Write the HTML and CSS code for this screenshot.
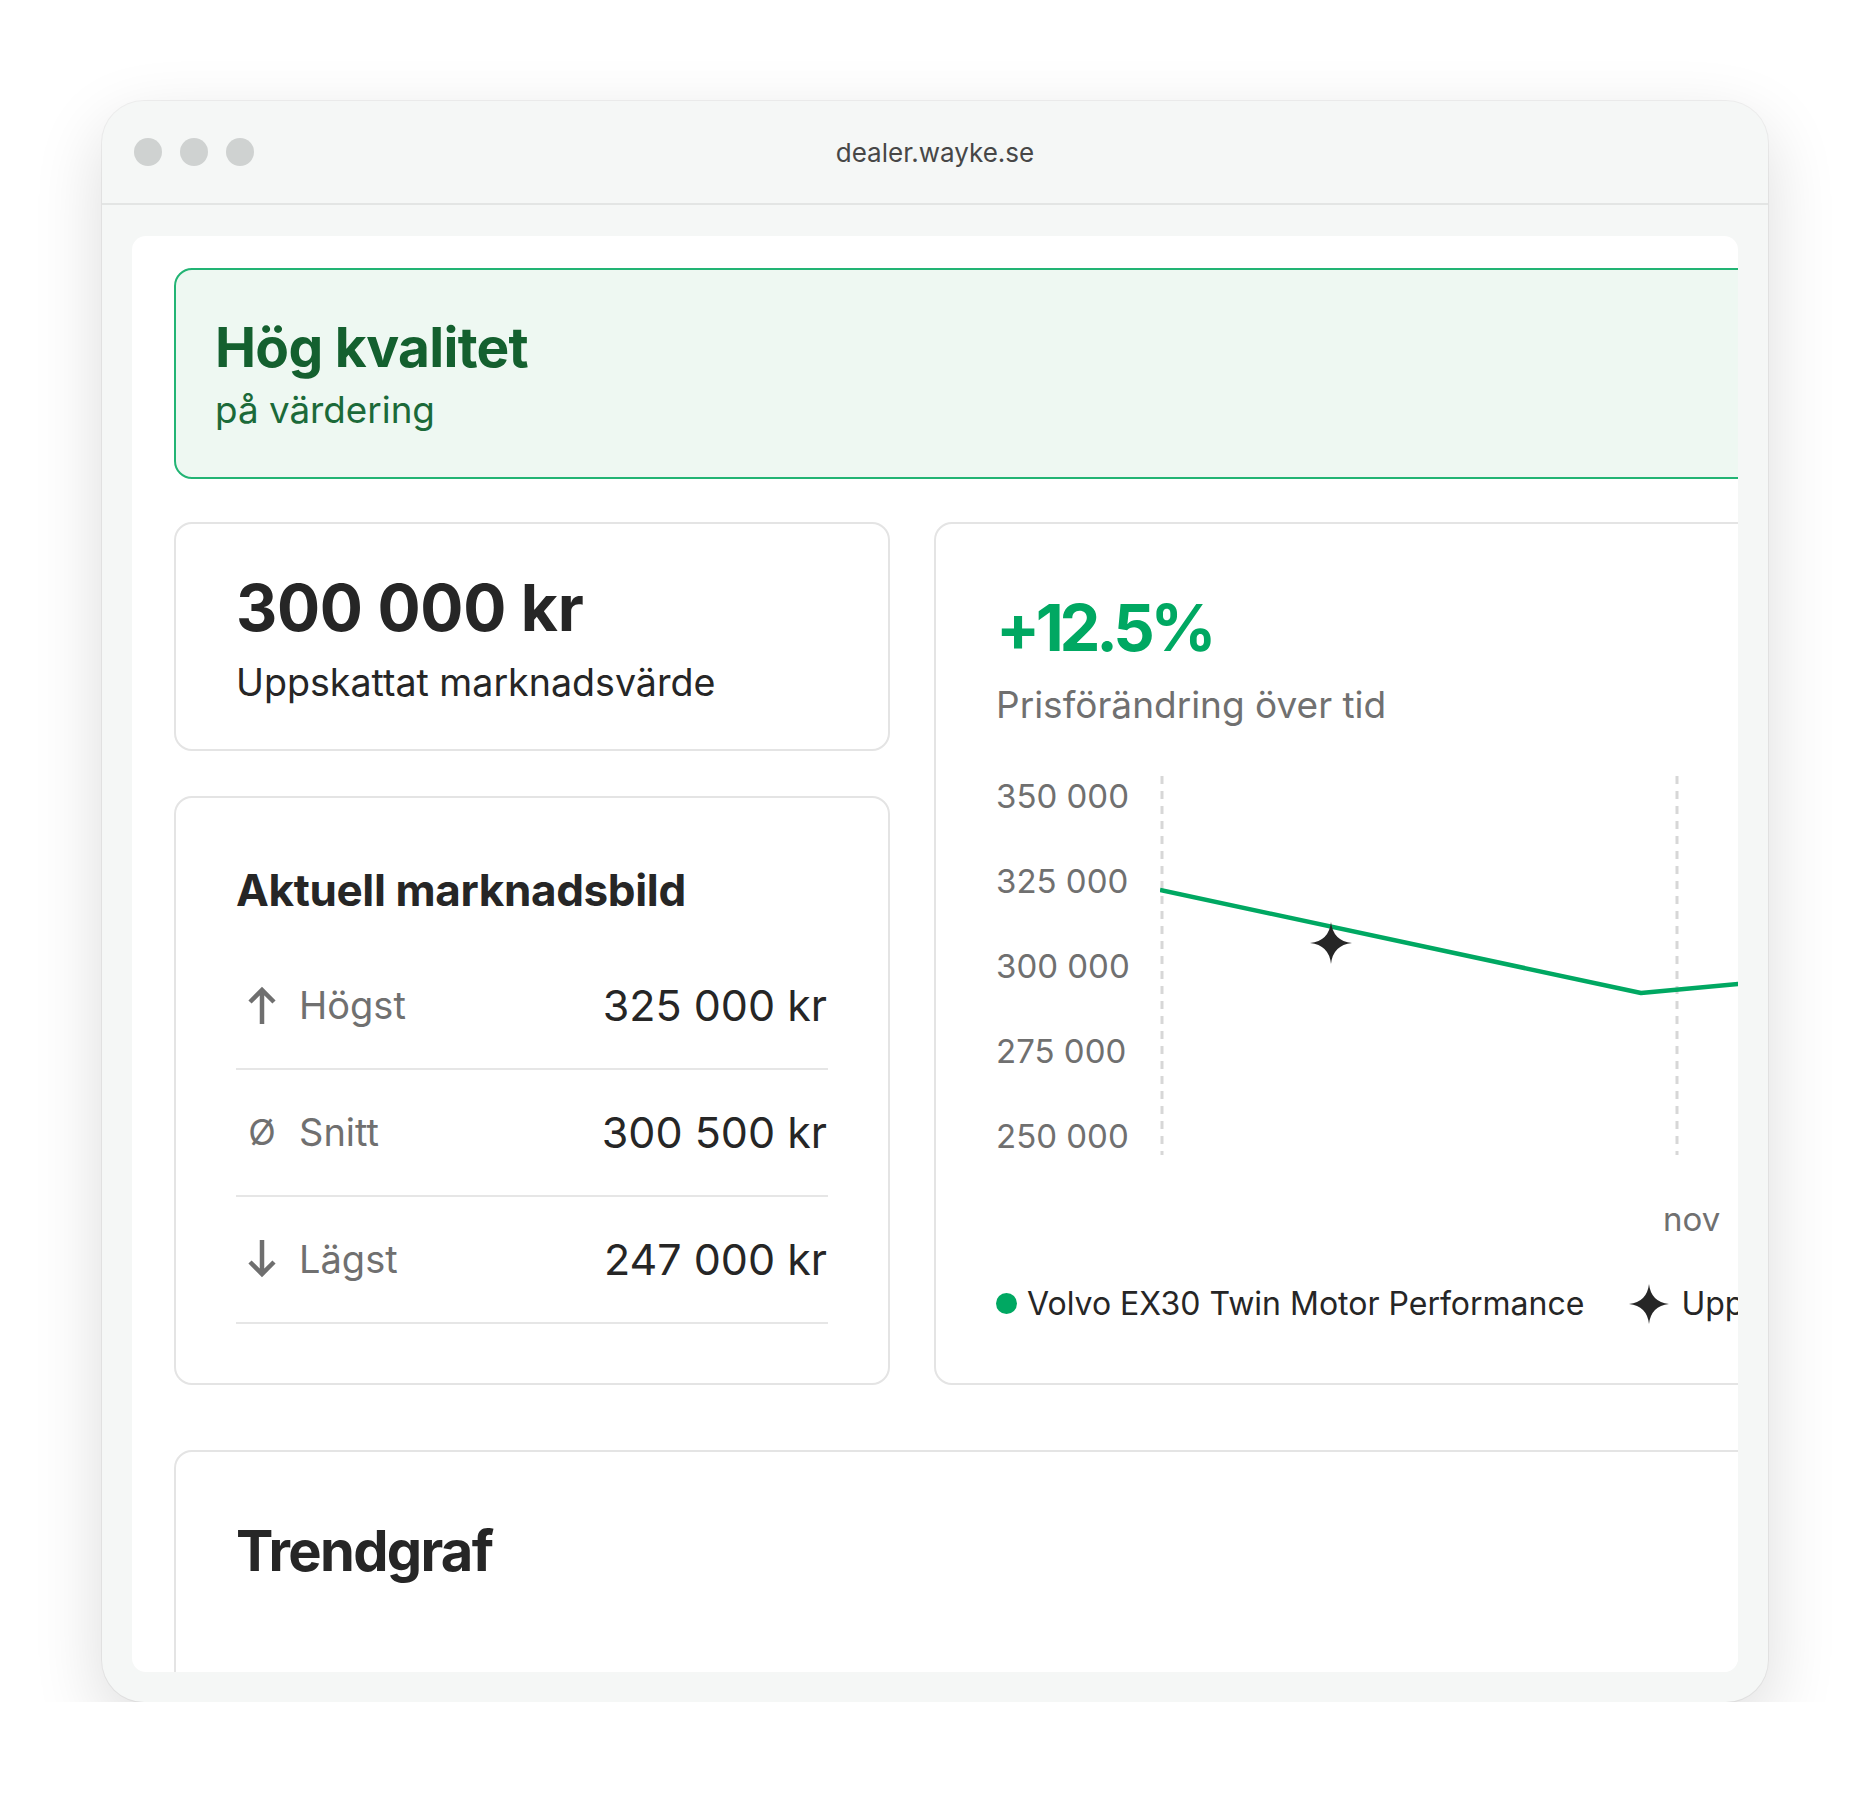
FILE: index.html
```html
<!DOCTYPE html>
<html lang="sv">
<head>
  <meta charset="UTF-8" />
  <meta name="viewport" content="width=device-width, initial-scale=1.0"/>
  <title>Wayke – Värdering</title>
  <link rel="stylesheet" href="styles.css">
</head>
<body>

  <div class="window">

    <!-- Browser chrome -->
    <div class="titlebar">
      <div class="dots"><span></span><span></span><span></span></div>
      <div class="url">dealer.wayke.se</div>
      <div></div>
    </div>

    <div class="viewport">
      <div class="page">

        <!-- Quality banner -->
        <div class="quality">
          <h2>Hög kvalitet</h2>
          <p>på värdering</p>
        </div>

        <div class="grid">

          <!-- Estimated value -->
          <div class="card estimate">
            <div class="big-value">300 000 kr</div>
            <div class="value-label">Uppskattat marknadsvärde</div>
          </div>

          <!-- Market overview -->
          <div class="card market">
            <h3>Aktuell marknadsbild</h3>
            <div class="row">
              <span class="row-icon">
                <svg width="28" height="38" viewBox="0 0 28 38"><path d="M14 38 V4 M2 16 L14 4 L26 16" fill="none" stroke="#6f6f6f" stroke-width="4.5"/></svg>
              </span>
              <span class="row-label">Högst</span>
              <span class="row-value">325 000 kr</span>
            </div>
            <div class="row">
              <span class="row-icon glyph">Ø</span>
              <span class="row-label">Snitt</span>
              <span class="row-value">300 500 kr</span>
            </div>
            <div class="row">
              <span class="row-icon">
                <svg width="28" height="38" viewBox="0 0 28 38"><path d="M14 0 V34 M2 22 L14 34 L26 22" fill="none" stroke="#6f6f6f" stroke-width="4.5"/></svg>
              </span>
              <span class="row-label">Lägst</span>
              <span class="row-value">247 000 kr</span>
            </div>
          </div>

          <!-- Price change chart -->
          <div class="card change">
            <div class="percent">+12.5%</div>
            <div class="change-label">Prisförändring över tid</div>

            <div class="chart">
              <div class="y-axis">
                <span>350 000</span>
                <span>325 000</span>
                <span>300 000</span>
                <span>275 000</span>
                <span>250 000</span>
              </div>
              <svg class="plot" width="680" height="380" viewBox="0 0 680 380">
                <line x1="2" y1="0" x2="2" y2="379" stroke="#d7d7d7" stroke-width="3" stroke-dasharray="8 7"/>
                <line x1="517" y1="0" x2="517" y2="379" stroke="#d7d7d7" stroke-width="3" stroke-dasharray="8 7"/>
                <polyline points="0,114 481,217 578,208 680,199" fill="none" stroke="#00a862" stroke-width="4.5" stroke-linejoin="round"/>
                <path d="M171 146 Q173 165 192 167 Q173 169 171 188 Q169 169 150 167 Q169 165 171 146 Z" fill="#262626"/>
              </svg>
              <div></div>
              <div class="x-axis"><span>nov</span></div>
            </div>

            <div class="legend">
              <span class="legend-dot"></span>
              <span>Volvo EX30 Twin Motor Performance</span>
              <svg class="legend-star" width="42" height="40" viewBox="0 0 40 40"><path d="M20 0 Q22 18 40 20 Q22 22 20 40 Q18 22 0 20 Q18 18 20 0 Z" fill="#262626"/></svg>
              <span>Uppskattat värde</span>
            </div>
          </div>

        </div>

        <!-- Trend graph -->
        <div class="card trend">
          <h3>Trendgraf</h3>
        </div>

      </div>
    </div>
  </div>

</body>
</html>
```

FILE: styles.css
```css
:root {
  --frame: #f5f7f6;
  --line: #e4e4e4;
  --green: #00a862;
  --dark-green: #14602f;
  --text: #262626;
  --muted: #707070;
}

body {
  margin: 0;
  background: #ffffff;
  font-family: 'Inter', 'Liberation Sans', sans-serif;
  color: var(--text);
}

.window {
  margin: 101px 0 0 102px;
  width: 1666px;
  height: 1601px;
  display: flex;
  flex-direction: column;
  background: var(--frame);
  border-radius: 42px;
  overflow: hidden;
  box-shadow: 0 0 0 1px rgba(0, 0, 0, 0.05), 0 24px 70px rgba(0, 0, 0, 0.14);
}

.titlebar {
  height: 102px;
  flex-shrink: 0;
  display: grid;
  grid-template-columns: 1fr auto 1fr;
  align-items: center;
  padding-left: 32px;
  border-bottom: 2px solid #e3e5e4;
}

.dots {
  display: flex;
  gap: 18px;
}

.dots span {
  width: 28px;
  height: 28px;
  border-radius: 50%;
  background: #cfd2d1;
}

.url {
  font-size: 26px;
  color: #474747;
  margin-left: -32px;
}

.viewport {
  flex: 1;
  margin: 31px 30px 30px;
  background: #ffffff;
  border-radius: 14px;
  overflow: hidden;
}

.page {
  width: 1664px;
  padding: 32px 0 0 42px;
}

/* banner */
.quality {
  border: 2px solid #22b474;
  border-radius: 18px;
  background: #eef8f2;
  padding: 44px 40px 45px 39px;
}

.quality h2 {
  margin: 0;
  font-size: 55px;
  font-weight: 700;
  line-height: 1.2;
  letter-spacing: -0.013em;
  color: var(--dark-green);
}

.quality p {
  margin: 8px 0 0;
  font-size: 36.8px;
  line-height: 1.2;
  color: #1b6a39;
}

.grid {
  display: grid;
  grid-template-columns: 716px 904px;
  gap: 45px 44px;
  margin-top: 43px;
}

.card {
  border: 2px solid var(--line);
  border-radius: 18px;
  background: #ffffff;
}

/* estimated value */
.estimate {
  padding: 46px 60px 45px;
}

.big-value {
  font-size: 64px;
  font-weight: 700;
  line-height: 1.2;
  letter-spacing: -0.005em;
}

.value-label {
  margin-top: 14px;
  font-size: 37.6px;
  line-height: 1.15;
}

/* market rows */
.market {
  padding: 66px 60px 59px;
}

.market h3 {
  margin: 0 0 26px;
  font-size: 44px;
  font-weight: 700;
  line-height: 1.2;
  letter-spacing: -0.008em;
}

.row {
  height: 125px;
  display: flex;
  align-items: center;
  border-bottom: 2px solid #e6e6e6;
}

.row-icon {
  width: 52px;
  margin-right: 11px;
  display: flex;
  justify-content: center;
}

.row-icon.glyph {
  font-size: 36px;
  line-height: 1;
  color: var(--muted);
}

.row-label {
  font-size: 38px;
  color: var(--muted);
}

.row-value {
  margin-left: auto;
  margin-right: 1px;
  font-size: 43px;
}

/* price change */
.change {
  grid-column: 2;
  grid-row: 1 / 3;
  padding: 65px 60px 0;
}

.percent {
  font-size: 65px;
  font-weight: 700;
  line-height: 1.2;
  letter-spacing: -0.066em;
  color: var(--green);
}

.change-label {
  margin-top: 16px;
  font-size: 37px;
  line-height: 1.2;
  color: var(--muted);
}

.chart {
  margin-top: 48px;
  display: grid;
  grid-template-columns: 164px 1fr;
  row-gap: 43px;
}

.y-axis {
  height: 380px;
  display: flex;
  flex-direction: column;
  justify-content: space-between;
  font-size: 33px;
  line-height: 40px;
  color: var(--muted);
}

.plot {
  display: block;
}

.x-axis {
  padding-left: 503px;
  font-size: 33px;
  line-height: 40px;
  color: var(--muted);
}

.legend {
  margin-top: 45px;
  display: flex;
  align-items: center;
  white-space: nowrap;
  font-size: 32px;
  line-height: 40px;
}

.legend-dot {
  flex-shrink: 0;
  width: 21px;
  height: 21px;
  border-radius: 50%;
  background: var(--green);
  margin-right: 10px;
}

.legend-star {
  margin: 0 11px 0 44px;
  flex-shrink: 0;
}

/* trend */
.trend {
  margin-top: 65px;
  height: 400px;
  padding: 66px 60px 0;
}

.trend h3 {
  margin: 0;
  font-size: 56px;
  font-weight: 700;
  line-height: 1.2;
  letter-spacing: -0.03em;
}
```
